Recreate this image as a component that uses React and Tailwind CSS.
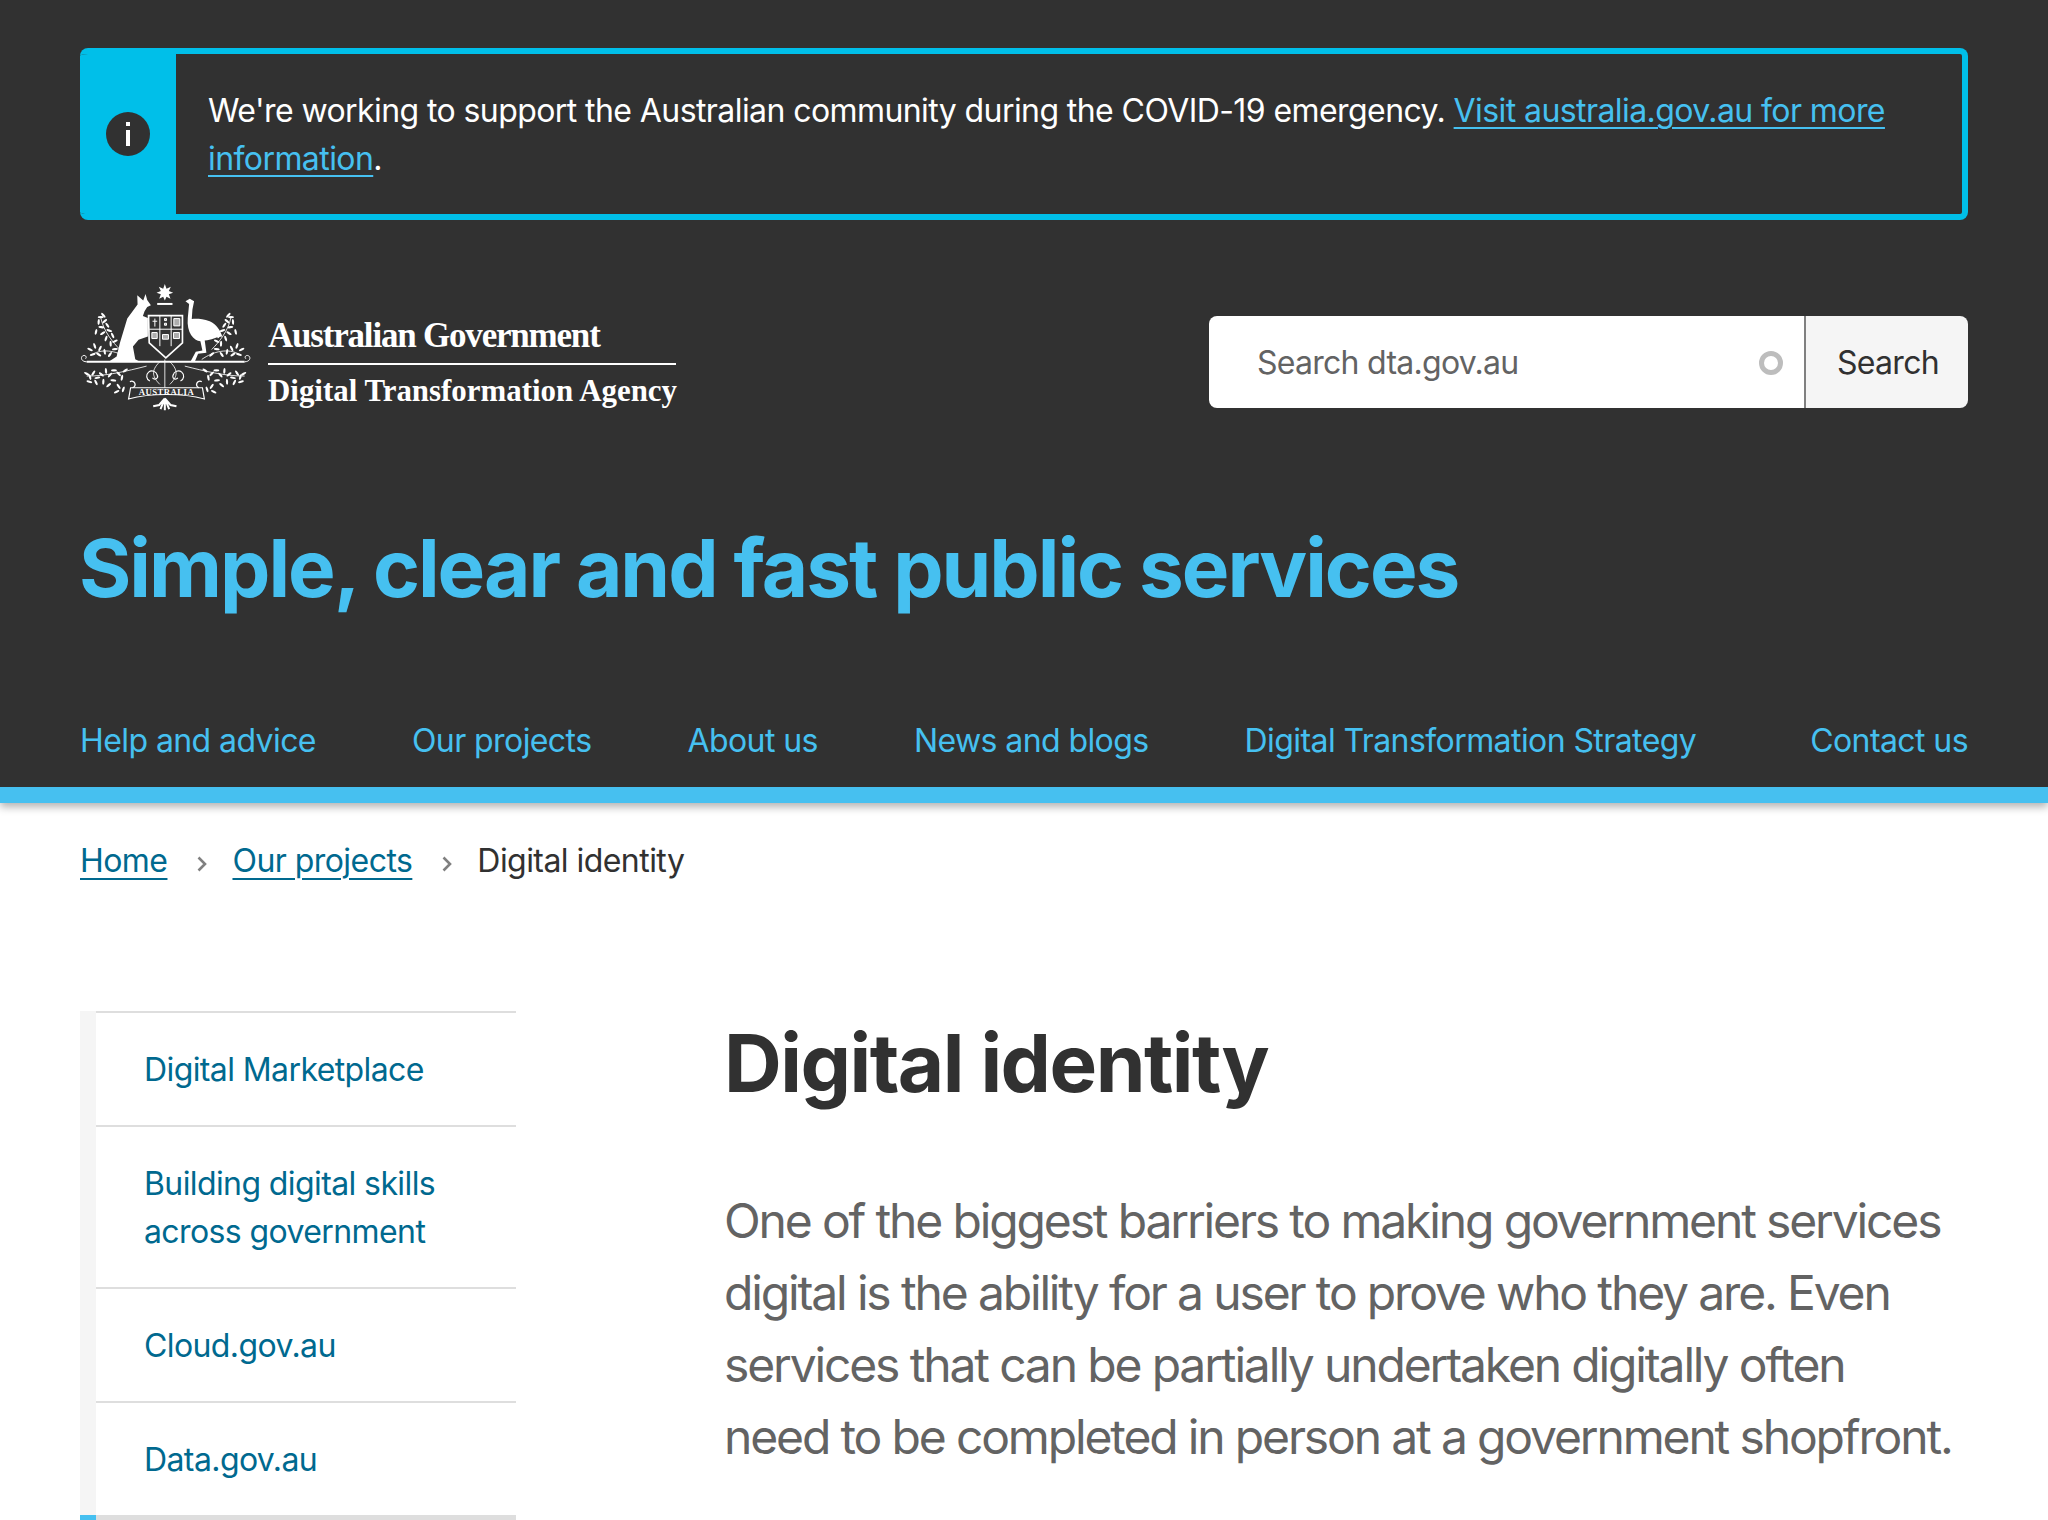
const leaves = (pts, rot = 0) =>
  pts.map(([x, y, r], i) => (
    <ellipse key={i} cx={x} cy={y} rx="9" ry="3.4" transform={`rotate(${r ?? (i * 47 + rot) % 180} ${x} ${y})`} fill="#fff" />
  ));

const upperLeft = [[92,128],[100,122],[86,142],[104,140],[94,158],[112,152],[78,172],[98,176],[118,168],[128,183],[108,192],[135,200],[60,225],[74,214],[90,222],[68,240],[86,240],[104,232],[120,240],[135,224],[150,240],[122,208]];
const lowerLeft = [[50,298],[60,308],[70,296],[82,310],[94,300],[108,290],[120,302],[132,288],[146,298],[100,322],[116,332],[130,318],[146,336],[156,310],[166,288],[58,322],[78,324],[160,345],[140,352]];

function Crest() {
  return (
    <svg viewBox="30 25 520 385" width="173" height="128" className="block shrink-0" aria-hidden="true">
      <polygon points="285,28 290,42 303,36 297,49 310,54 297,59 302,72 290,66 285,78 280,66 268,72 273,59 260,54 273,49 267,36 280,42" fill="#fff" />
      <path d="M262 85h46v6h-46z" fill="#fff" />
      <path d="M202 62L220 78L227 58L232 76L243 92L232 97L224 110L219 124L234 130L234 186L206 196L189 216L196 254L210 262L116 262L140 246L150 205L172 132L203 90Z" fill="#fff" />
      <path d="M347 80L360 72L373 80L368 105L366 133C380 132 398 132 420 140C440 148 452 168 458 186C440 186 425 198 405 198L410 235L385 238L375 262L362 262L378 232L398 228L392 200C372 198 350 175 354 130L358 88Z" fill="#fff" />
      <path d="M236 123H338V205L288 250L238 205Z" fill="#333" stroke="#fff" strokeWidth="5" />
      <path d="M270 123V215M304 123V215M238 164H338" stroke="#fff" strokeWidth="3" fill="none" />
      <path d="M248 140H262M255 132V156M284 132h6v6h-6zM284 146h6v6h-6zM312 132h18v22h-18zM246 174h16v18h-16zM278 180h18v14h-18zM311 174h18v18h-18z" stroke="#fff" strokeWidth="3" fill="#fff" fillOpacity="0.6" />
      <path d="M50 262H525" stroke="#fff" strokeWidth="6" />
      <path d="M50 262C35 262 30 250 38 244C46 240 52 248 46 253M525 262C540 262 545 250 537 244C529 240 523 248 529 253" stroke="#fff" strokeWidth="3" fill="none" />
      <g stroke="#fff" strokeWidth="2.5" fill="none">
        <path d="M92 128C100 170 130 205 150 225M66 240C100 220 145 230 180 255" />
        <path d="M484 128C476 170 446 205 426 225M510 240C476 220 431 230 396 255" />
        <path d="M50 305C110 305 170 290 230 275M525 305C465 305 405 290 345 275" />
        <path d="M285 340V255M270 330C250 310 240 290 270 262M300 330C320 310 330 290 300 262" />
        <path d="M240 320a16 16 0 1 1 22-18a8 8 0 1 1-14 8M332 320a16 16 0 1 0-22-18a8 8 0 1 0 14 8" strokeWidth="3.5" />
        <path d="M182 340H398L404 374C340 356 240 356 176 374Z" strokeWidth="3.5" />
        <path d="M180 322a10 10 0 1 1 8 18M396 322a10 10 0 1 0-8 18" strokeWidth="4" />
      </g>
      <g>{leaves(upperLeft)}</g>
      <g>{leaves(lowerLeft, 30)}</g>
      <g transform="translate(576 0) scale(-1 1)">{leaves(upperLeft)}</g>
      <g transform="translate(572 0) scale(-1 1)">{leaves(lowerLeft, 30)}</g>
      <text x="290" y="361" textAnchor="middle" fontFamily="'Liberation Serif', serif" fontSize="26" fontWeight="700" fill="#fff" letterSpacing="1.5">AUSTRALIA</text>
      <path d="M285 372L268 392L250 396M285 372L302 392L320 396M285 372L272 404M285 372L298 404M285 372V408" stroke="#fff" strokeWidth="6" fill="none" />
    </svg>
  );
}

const nav = ["Help and advice", "Our projects", "About us", "News and blogs", "Digital Transformation Strategy"];
const side = [
  ["Digital Marketplace"],
  ["Building digital skills", "across government"],
  ["Cloud.gov.au"],
  ["Data.gov.au"],
];

function Chevron() {
  return (
    <svg width="12" height="18" viewBox="0 0 12 18" className="ml-[29px] mr-[24px] mt-[6px] shrink-0 self-center" aria-hidden="true">
      <path d="M2.5 2.5L9 9l-6.5 6.5" fill="none" stroke="#808080" strokeWidth="2.6" />
    </svg>
  );
}

export default function App() {
  return (
    <div className="h-screen overflow-hidden bg-white font-['Inter',sans-serif] text-[32px] leading-[48px] tracking-[-0.6px] text-[#313131]">
      <header className="relative border-b-[16px] border-[#46c0f0] bg-[#313131] px-20 pt-12 shadow-[0_4px_8px_rgba(0,0,0,0.3)]">
        <div className="flex h-[172px] overflow-hidden rounded-lg border-[6px] border-l-0 border-[#00bfe9]">
          <div className="flex w-[96px] shrink-0 items-center justify-center bg-[#00bfe9]">
            <div className="flex h-[44px] w-[44px] items-center justify-center rounded-full bg-[#313131]">
              <svg width="6" height="24" viewBox="0 0 6 24" aria-hidden="true">
                <rect x="1" y="0" width="4" height="4" fill="#fff" />
                <rect x="1" y="8" width="4" height="16" fill="#fff" />
              </svg>
            </div>
          </div>
          <p className="flex-1 pl-8 pr-[60px] pt-[33px] tracking-[-0.58px] text-white">
            We're working to support the Australian community during the COVID-19 emergency.{" "}
            <a className="text-[#46c0f0] underline decoration-2 underline-offset-[5px]">Visit australia.gov.au for more information</a>.
          </p>
        </div>

        <div className="mt-[63px] flex items-start justify-between">
          <div className="flex items-end">
            <Crest />
            <div className="mb-[2px] ml-[15px] w-[408px] font-['Liberation_Serif',serif] font-bold tracking-normal text-white">
              <div className="border-b-2 border-white pb-[7px] text-[35px] leading-[40px] tracking-[-1.2px]">Australian Government</div>
              <div className="whitespace-nowrap pt-[8px] text-[30.9px] leading-[36px]">Digital Transformation Agency</div>
            </div>
          </div>
          <div className="mt-[33px] flex h-[92px] w-[759px] overflow-hidden rounded-lg">
            <div className="flex w-[595px] items-center justify-between bg-white pl-12 pr-[21px] pt-[1px] tracking-[-0.73px] text-[#636363]">
              <span>Search dta.gov.au</span>
              <span className="h-[24px] w-[24px] rounded-full border-[5px] border-[#bdbdbd] blur-[0.5px]" />
            </div>
            <div className="flex flex-1 items-center justify-center border-l-2 border-[#808080] bg-[#f5f5f5] pl-[2px] pt-[1px] tracking-[-0.7px]">Search</div>
          </div>
        </div>

        <h2 className="-ml-[1px] mt-[109px] text-[80px] font-bold leading-[96px] tracking-[-2.02px] text-[#46c0f0]">Simple, clear and fast public services</h2>

        <nav className="mt-[101px] flex h-[70px] gap-24 tracking-[-0.58px] text-[#46c0f0]">
          {nav.map((n) => <a key={n} className="whitespace-nowrap">{n}</a>)}
          <a className="ml-auto whitespace-nowrap">Contact us</a>
        </nav>
      </header>

      <div className="flex px-20 pt-[34px] tracking-[-0.55px] text-[#00698f]">
        <a className="underline decoration-2 underline-offset-[6px]">Home</a>
        <Chevron />
        <a className="underline decoration-2 underline-offset-[6px]">Our projects</a>
        <Chevron />
        <span className="text-[#313131]">Digital identity</span>
      </div>

      <main className="flex px-20 pt-[126px]">
        <ul className="w-[436px] shrink-0 border-l-[16px] border-[#f5f5f5] tracking-[-0.6px] text-[#00698f]">
          {side.map((lines) => (
            <li key={lines[0]} className="border-t-2 border-[#dedede] pb-[31px] pl-12 pt-[33px]">
              {lines.map((l) => <div key={l}>{l}</div>)}
            </li>
          ))}
          <li className="relative -ml-[16px] h-[8px] bg-[#dedede]">
            <div className="h-full w-[16px] bg-[#46c0f0]" />
          </li>
        </ul>
        <article className="ml-[208px] flex-1 pt-[4px]">
          <h1 className="text-[80px] font-bold leading-[96px] tracking-[-1.5px] text-[#313131]">Digital identity</h1>
          <p className="mt-[74px] pr-[12px] text-[48px] leading-[72px] tracking-[-2.15px] text-[#636363]">
            One of the biggest barriers to making government services digital is the ability for a user to prove who they are. Even services that can be partially undertaken digitally often need to be completed in person at a government shopfront.
          </p>
        </article>
      </main>
    </div>
  );
}
